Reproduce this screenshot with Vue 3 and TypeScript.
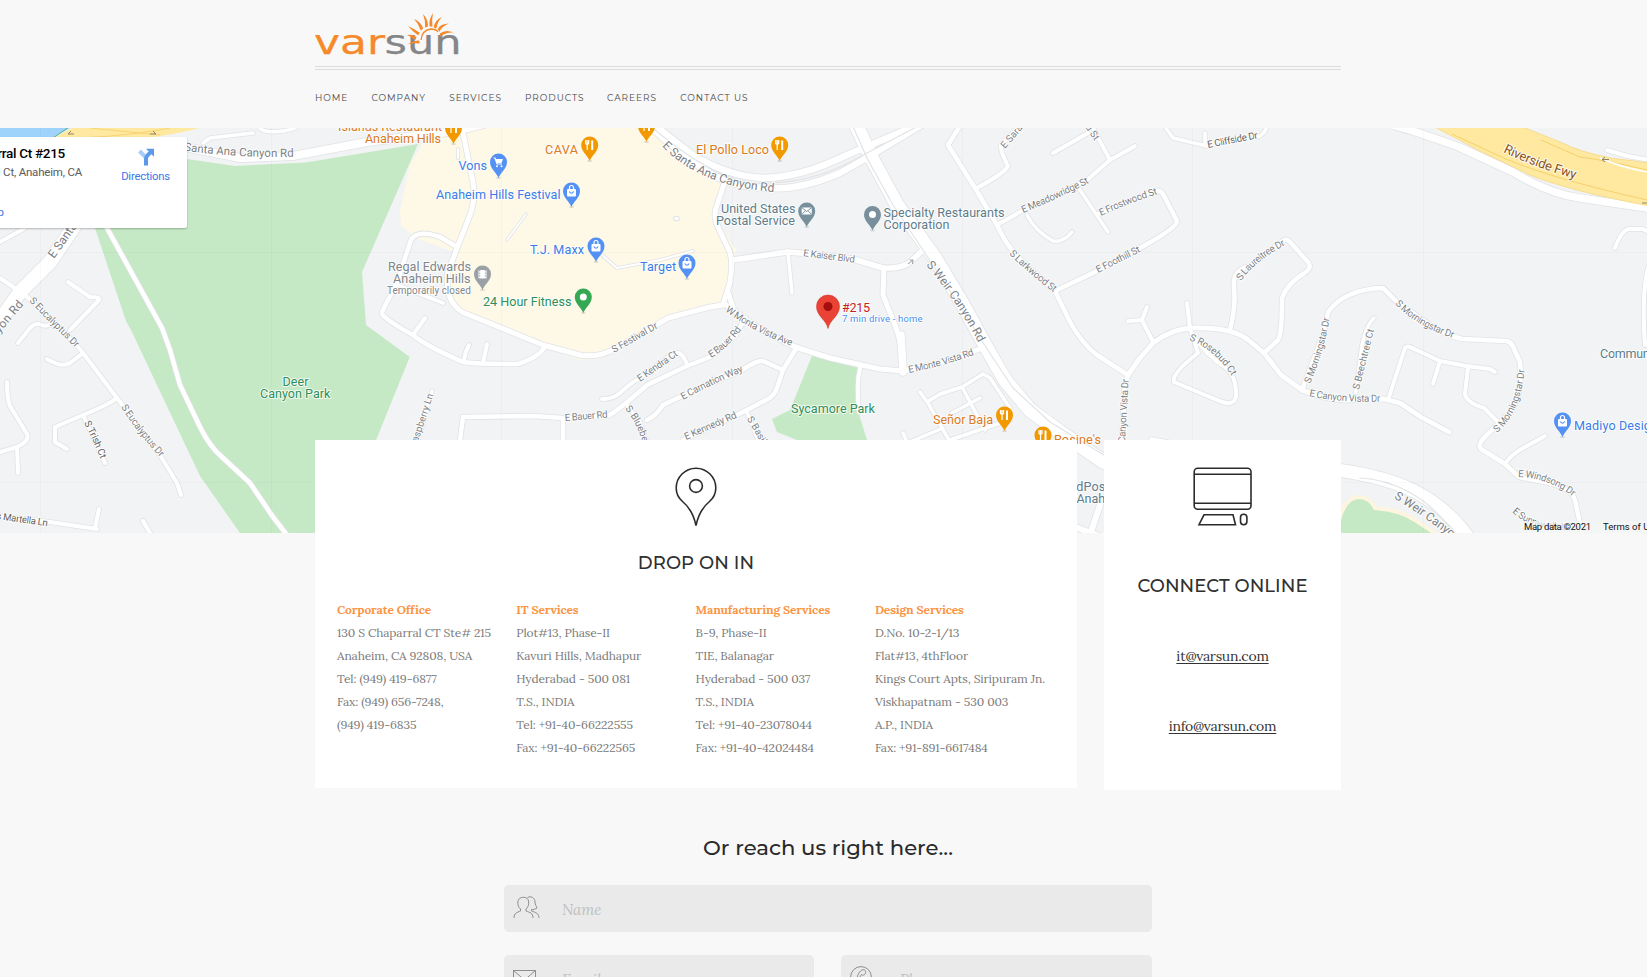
<script setup lang="ts">
interface Road { d: string; w: number }
interface RoadLabel { text: string; d: string; size?: number; color?: string; len?: number }
interface Poi { x: number; y: number; kind: 'food' | 'shop' | 'cart' | 'dot' | 'mail' | 'film'; color: string }
interface PlaceLabel { text: string; x: number; y: number; color: string; len: number; size?: number }

const nav = [
  { label: 'Home', w: 32.5 },
  { label: 'Company', w: 53.8 },
  { label: 'Services', w: 51.7 },
  { label: 'Products', w: 58 },
  { label: 'Careers', w: 49.3 },
  { label: 'Contact us', w: 68 },
]

const offices = [
  { title: 'Corporate Office', lines: ['130 S Chaparral CT Ste# 215', 'Anaheim, CA 92808, USA', 'Tel: (949) 419-6877', 'Fax: (949) 656-7248,', '(949) 419-6835'] },
  { title: 'IT Services', lines: ['Plot#13, Phase-II', 'Kavuri Hills, Madhapur', 'Hyderabad - 500 081', 'T.S., INDIA', 'Tel: +91-40-66222555', 'Fax: +91-40-66222565'] },
  { title: 'Manufacturing Services', lines: ['B-9, Phase-II', 'TIE, Balanagar', 'Hyderabad - 500 037', 'T.S., INDIA', 'Tel: +91-40-23078044', 'Fax: +91-40-42024484'] },
  { title: 'Design Services', lines: ['D.No. 10-2-1/13', 'Flat#13, 4thFloor', 'Kings Court Apts, Siripuram Jn.', 'Viskhapatnam - 530 003', 'A.P., INDIA', 'Fax: +91-891-6617484'] },
]

const rays: number[][] = [
  [419, 34, 413, 30, 408, 26], [422, 29.5, 420, 23, 414, 19], [426.5, 27, 427, 20, 423, 14],
  [431, 26.5, 430, 20, 433, 13], [435, 28, 436, 21, 442, 17], [438.5, 30.5, 441, 25, 449, 23.5],
  [440, 35, 446, 30.5, 453.5, 32.5], [416, 38.5, 412, 35.5, 407, 35], [419.5, 42, 414, 41.5, 408, 44],
]
const rayPath = ([bx, by, cx, cy, tx, ty]: number[]) => {
  const dx = tx - bx
  const dy = ty - by
  const l = Math.hypot(dx, dy)
  const nx = (-dy / l) * 1.5
  const ny = (dx / l) * 1.5
  return `M${bx + nx} ${by + ny}Q${cx + nx} ${cy + ny} ${tx} ${ty}Q${cx - nx} ${cy - ny} ${bx - nx} ${by - ny}Z`
}

const roads: Road[] = [
  // west side
  { d: 'M76 222L73 228L50 262L20 292L-4 326', w: 14 },
  { d: 'M0 242L25 228', w: 4 },
  { d: 'M0 278L25 295L50 318L78 347L83 353L117 398L160 455L177 483L181 495', w: 4 },
  { d: 'M68 282L90 297Q101 297 99 300L70 330', w: 4 },
  { d: 'M55 320Q48 328 42 325Q35 322 30 328L18 343', w: 4 },
  { d: 'M47 359Q62 368 70 363L83 353', w: 4 },
  { d: 'M7 382Q7 398 10 406L27 434Q30 441 17 447L0 452M17 447L18 473', w: 4 },
  { d: 'M117 398Q108 405 83 415L55 427L55 442L67 449M83 415L105 463', w: 4 },
  { d: 'M0 516L50 522L97 529M99 509L95 528M143 521L150 533', w: 4 },
  { d: 'M100 216L107 228L162 328L170 350L180 385L200 427Q210 447 222 457L250 483L273 517L287 535', w: 4.5 },
  { d: 'M180 146L240 158L293 156L367 142L455 131L500 120', w: 8 },
  { d: 'M203 143L210 138L253 133M258 126Q262 133 278 131.5T298 126', w: 3.5 },
  // shopping district
  { d: 'M461 124L463 133L473 182Q476 197 470 215L457 248L448 272Q444 300 462 312L543 345L580 355Q596 358 613 350L668 318L710 307L723 305L730 282Q734 258 728 248L717 225Q713 214 717 205L724 184', w: 5 },
  { d: 'M457 247L440 237Q417 229 411 240L397 282L382 312Q380 317 413 335Q424 345 463 362Q475 364 518 364Q540 357 545 346', w: 4.5 },
  { d: 'M397 285L443 303M425 318L413 335M469 345Q465 352 464 360M487 344L483 363', w: 4 },
  { d: 'M526 214L507 240', w: 1.6 },
  { d: 'M602 255L617 268L660 260L693 251M458 149L458 158', w: 2.2 },
  { d: 'M645 112L663 132L693 155Q727 176 763 178Q800 178 847 155L913 127', w: 6.5 },
  { d: 'M638 112L652 128Q690 162 713 175T773 188Q800 190 840 173L863 160L923 124', w: 6.5 },
  // Kaiser and Monta Vista
  { d: 'M733 260L787 252L800 253L853 259L883 268Q902 269 910 262L923 250', w: 5.5 },
  { d: 'M788 253L792 293', w: 3.5 },
  { d: 'M884 268L883 295L895 325Q903 345 903 372', w: 5 },
  { d: 'M901 335L903 372', w: 7.5 },
  { d: 'M728 292L733 307M726 305L760 329L795 347L830 358L880 369L903 371L940 363L980 349', w: 5 },
  { d: 'M860 368Q856 385 859 412', w: 4 },
  { d: 'M797 347L783 370L777 388Q774 396 768 399L745 411L683 440', w: 4.5 },
  { d: 'M747 412L758 440', w: 3.5 },
  { d: 'M647 420Q655 417 663 405L680 397L742 370Q757 360 763 361L783 370', w: 4.5 },
  { d: 'M460 440L463 417L533 416L563 418L607 416Q613 415 647 385L687 366L710 357L736 335L745 318M563 418L563 442', w: 4.5 },
  { d: 'M627 405L640 422L647 442', w: 3.5 },
  { d: 'M602 399Q613 399 620 393Q632 382 637 380L674 353Q683 351 687 365', w: 4 },
  { d: 'M432 391L418 440', w: 3.5 },
  // Weir Canyon
  { d: 'M853 118L870 155L897 205L935 258L962 303L985 345L1005 380L1030 410L1060 432L1104 462', w: 14 },
  { d: 'M1320 468Q1380 474 1414 491T1470 540', w: 13 },
  // east of Weir Canyon
  { d: 'M960 126L948 145L975 188L997 225Q1008 249 1025 264L1055 291L1070 322Q1083 345 1097 355L1128 375', w: 4.5 },
  { d: 'M1020 126L1001 145Q1000 151 1008 166Q1006 172 977 188', w: 4 },
  { d: 'M997 225L1020 212L1087 180L1110 160L1135 146M1092 126L1110 160M1053 153L1088 133', w: 4 },
  { d: 'M1027 215Q1035 231 1053 241Q1063 243 1072 232M1078 187L1108 232', w: 3.5 },
  { d: 'M1098 214L1155 191Q1160 190 1163 194L1177 221Q1177 228 1140 248L1095 272L1057 290', w: 4.5 },
  { d: 'M1163 124L1173 138L1207 146M1205 133L1205 146M1258 137Q1265 134 1267 126', w: 3.5 },
  { d: 'M1122 442L1125 385L1128 375L1140 358L1153 343Q1173 328 1193 328Q1230 327 1247 339L1264 353L1281 375L1302 390Q1320 398 1344 400L1384 399L1400 403L1421 417L1449 432', w: 4.8 },
  { d: 'M1128 321L1142 320L1153 342M1147 307L1142 320M1187 303L1190 328', w: 4 },
  { d: 'M1190 328L1198 353Q1171 374 1174 382L1222 402Q1238 407 1236 390Q1235 375 1225 367Q1208 357 1192 334', w: 4 },
  { d: 'M1230 330Q1236 306 1234 288T1250 266L1280 243Q1286 237 1290 242L1308 262Q1313 268 1303 274Q1288 283 1282 298Q1282 335 1278 340L1264 353', w: 4.5 },
  { d: 'M1302 390L1324 332L1328 312Q1345 289 1383 288L1397 302L1430 325Q1450 337 1463 339L1506 341Q1512 342 1514 349L1520 362Q1523 390 1512 411L1491 431Q1476 444 1481 449L1505 464L1519 477L1550 483Q1572 489 1575 500L1582 533', w: 4.5 },
  { d: 'M1355 398L1362 345Q1366 325 1374 318', w: 3.5 },
  { d: 'M1388 400L1405 348Q1407 345 1412 348L1440 361L1466 366L1490 369L1495 372M1440 361L1433 384', w: 4 },
  { d: 'M1468 368L1465 393Q1465 402 1484 408L1498 422M1505 464Q1510 455 1525 447L1545 436', w: 4 },
  { d: 'M1395 126L1410 130L1457 146L1513 172Q1550 194 1580 198L1647 208', w: 7.5 },
  { d: 'M1607 150L1627 156L1650 160M1615 248Q1622 229 1630 229H1643L1650 233M1650 262Q1641 285 1645 345', w: 4 },
  // Señor Baja block
  { d: 'M920 392L928 403L950 442M927 402L940 394L962 387L983 374L990 378L1010 408M962 387L985 430M952 413L980 398M903 433L907 442M910 442L943 428M950 440L985 428L1010 420', w: 3.5 },
  { d: 'M1151 439L1168 442', w: 3.5 },
  { d: 'M1070 525L1104 538M1100 505L1090 535', w: 6 },
]

const dividers = ['M850 120L868 160L893 205L921 247L956 300L991 355L1013 388L1050 422L1104 455', 'M1360 478Q1385 479 1409 492T1452 530', 'M648 124Q690 160 720 173T765 183Q810 183 850 162L920 125']

const roadLabels: RoadLabel[] = [
  { text: 'Santa Ana Canyon Rd', d: 'M184 150.500Q240 158.500 300 156.500', size: 11.5, len: 110 },
  { text: 'E Santa', d: 'M54 259L90 208', size: 12 },
  { text: 'nyon Rd', d: 'M-5 339L30 297', size: 12, len: 45 },
  { text: 'S Eucalyptus Dr', d: 'M29 301Q55 328 80 352', len: 66 },
  { text: 'S Eucalyptus Dr', d: 'M121 407Q138 434 163 460', len: 64 },
  { text: 'S Trish Ct', d: 'M84 423Q93 440 102 462', len: 40, color: '#66625c' },
  { text: 's Martella Ln', d: 'M-4 519L60 528', len: 52, color: '#66625c' },
  { text: 'E Santa Ana Canyon Rd', d: 'M662 146Q700 187 775 192', size: 12, len: 124 },
  { text: 'S Festival Dr', d: 'M614 353L670 321', len: 51 },
  { text: 'W Monta Vista Ave', d: 'M725 311Q758 335 800 349', len: 75 },
  { text: 'E Bauer Rd', d: 'M711 358Q728 348 745 325', len: 42 },
  { text: 'E Bauer Rd', d: 'M565 421L615 417', len: 43 },
  { text: 'E Kendra Ct', d: 'M640 382L690 347', len: 47 },
  { text: 'E Carnation Way', d: 'M683 400Q715 382 752 368', len: 67 },
  { text: 'E Kennedy Rd', d: 'M686 440L745 414', len: 56 },
  { text: 'S Blueberry', d: 'M625 409Q640 425 647 460' },
  { text: 'S Basil', d: 'M747 419Q755 432 766 452' },
  { text: 'Raspberry Ln', d: 'M416 448L435 390', len: 56 },
  { text: 'E Kaiser Blvd', d: 'M803 256L865 264', len: 52 },
  { text: 'E Monte Vista Rd', d: 'M909 373Q945 366 982 352', len: 68 },
  { text: 'S Weir Canyon Rd', d: 'M926 265Q960 305 982 350', size: 12, len: 94 },
  { text: 'E Sara', d: 'M1005 149L1030 120' },
  { text: 'd St', d: 'M1085 127L1100 149' },
  { text: 'E Meadowridge St', d: 'M1023 213Q1055 200 1097 179', len: 73 },
  { text: 'E Frostwood St', d: 'M1101 216Q1130 202 1165 192', len: 61 },
  { text: 'E Foothill St', d: 'M1098 273L1150 247', len: 48 },
  { text: 'S Larkwood St', d: 'M1009 254Q1029 274 1060 297', len: 59 },
  { text: 'E Cliffside Dr', d: 'M1208 148L1270 136', len: 51, color: '#66625c' },
  { text: 'S Laureltree Dr', d: 'M1241 281Q1256 259 1293 241', len: 58 },
  { text: 'S Rosebud Ct', d: 'M1189 340Q1218 350 1237 385', len: 57 },
  { text: 'Canyon Vista Dr', d: 'M1125 443L1129 372', len: 64 },
  { text: 'E Canyon Vista Dr', d: 'M1309 396Q1345 404 1390 401', len: 72 },
  { text: 'S Morningstar Dr', d: 'M1310 384Q1325 350 1331 310', len: 69 },
  { text: 'S Beechtree Ct', d: 'M1359 390L1375 326', len: 62 },
  { text: 'S Morningstar Dr', d: 'M1395 304Q1420 330 1463 341', len: 68 },
  { text: 'S Morningstar Dr', d: 'M1497 433Q1523 410 1525 362', len: 71 },
  { text: 'E Windsong Dr', d: 'M1518 477Q1552 478 1578 501', len: 59 },
  { text: 'E Sunnywalk Ln', d: 'M1512 512Q1526 526 1552 529L1590 532', len: 63 },
  { text: 'S Weir Canyon Rd', d: 'M1394 498Q1430 520 1480 560', size: 12, len: 94 },
  { text: 'Riverside Fwy', d: 'M1503 152Q1540 170 1590 183', size: 13, color: '#8b5523', len: 77 },
]

const pois: Poi[] = [
  { x: 453.5, y: 144, kind: 'food', color: '#f29900' },
  { x: 589.7, y: 161, kind: 'food', color: '#f29900' },
  { x: 646.5, y: 142, kind: 'food', color: '#f29900' },
  { x: 779.7, y: 161, kind: 'food', color: '#f29900' },
  { x: 1004.5, y: 431, kind: 'food', color: '#f29900' },
  { x: 1043, y: 451, kind: 'food', color: '#f29900' },
  { x: 498.5, y: 178, kind: 'cart', color: '#5491f5' },
  { x: 571.5, y: 207, kind: 'shop', color: '#5491f5' },
  { x: 596, y: 262, kind: 'shop', color: '#5491f5' },
  { x: 687, y: 279, kind: 'shop', color: '#5491f5' },
  { x: 1562.5, y: 437, kind: 'shop', color: '#5491f5' },
  { x: 583.3, y: 313, kind: 'dot', color: '#34a853' },
  { x: 482.5, y: 290, kind: 'film', color: '#9aa0a6' },
  { x: 806.7, y: 227, kind: 'mail', color: '#78909c' },
  { x: 872.5, y: 230.5, kind: 'dot', color: '#78909c' },
]

const orange = '#d97b1e'
const blue = '#3b7de8'
const slate = '#607d8b'
const gray = '#80868b'
const green = '#2f8f57'
const places: PlaceLabel[] = [
  { text: 'Islands Restaurant', x: 338, y: 130.5, color: orange, len: 104 },
  { text: 'Anaheim Hills', x: 365, y: 143, color: orange, len: 76 },
  { text: 'CAVA', x: 545, y: 154, color: orange, len: 33 },
  { text: 'El Pollo Loco', x: 696, y: 154, color: orange, len: 73 },
  { text: 'Señor Baja', x: 933, y: 424, color: orange, len: 60 },
  { text: "Rosine's", x: 1054, y: 444, color: orange, len: 47 },
  { text: 'Vons', x: 458.5, y: 170.3, color: blue, len: 28.5 },
  { text: 'Anaheim Hills Festival', x: 436, y: 199.3, color: blue, len: 124.5 },
  { text: 'T.J. Maxx', x: 530, y: 254, color: blue, len: 54 },
  { text: 'Target', x: 640, y: 271.3, color: blue, len: 36 },
  { text: 'Madiyo Design', x: 1574, y: 430, color: blue, len: 84 },
  { text: '24 Hour Fitness', x: 483, y: 305.5, color: green, len: 88.5 },
  { text: 'Regal Edwards', x: 388, y: 270.7, color: gray, len: 83 },
  { text: 'Anaheim Hills', x: 393, y: 283, color: gray, len: 77.5 },
  { text: 'Temporarily closed', x: 387, y: 293.5, color: gray, len: 84, size: 10 },
  { text: 'United States', x: 721, y: 212.7, color: slate, len: 74.5 },
  { text: 'Postal Service', x: 716, y: 225.4, color: slate, len: 79 },
  { text: 'Specialty Restaurants', x: 883.5, y: 216.5, color: slate, len: 121 },
  { text: 'Corporation', x: 883.5, y: 229, color: slate, len: 66 },
  { text: 'UnitedPost', x: 1046.5, y: 491, color: slate, len: 63 },
  { text: 'Anaheim', x: 1076.5, y: 503, color: slate, len: 49 },
  { text: 'Community', x: 1600, y: 358, color: slate, len: 62 },
  { text: 'Deer', x: 282.5, y: 385.7, color: green, len: 26 },
  { text: 'Canyon Park', x: 260, y: 398, color: green, len: 70.5 },
  { text: 'Sycamore Park', x: 791, y: 413.3, color: green, len: 84 },
  { text: '#215', x: 842, y: 311.7, color: '#c5221f', len: 28 },
  { text: '7 min drive - home', x: 842, y: 322.3, color: '#4a8ff0', len: 80.5, size: 9.5 },
]
const gridX = [40.5, 271.5, 501.5, 732.5, 962.5, 1192.5, 1423.5]
</script>

<template>
  <div class="page">
    <header class="header">
      <svg class="logo" viewBox="315 10 146 46" width="146" height="46" role="img" aria-label="varsun">
        <text class="brand warm" x="314" y="53.6" textLength="71" lengthAdjust="spacingAndGlyphs">var</text>
        <text class="brand cool" x="384.5" y="53.6" textLength="77" lengthAdjust="spacingAndGlyphs">sun</text>
        <g fill="#f6892a">
          <path v-for="(r, i) in rays" :key="i" :d="rayPath(r)" />
        </g>
        <path d="M421 40Q422 30 431 29Q436 29 438 32" fill="none" stroke="#f6892a" stroke-width="1.3" />
      </svg>
      <nav class="nav">
        <a v-for="n in nav" :key="n.label" :style="{ width: n.w + 'px' }">{{ n.label }}</a>
      </nav>
    </header>

    <section class="map">
      <svg class="canvas" viewBox="0 128 1647 405" width="1647" height="405">
        <defs>
          <path v-for="(l, i) in roadLabels" :id="'rl' + i" :key="i" :d="l.d" />
        </defs>
        <rect y="128" width="1647" height="405" fill="#f1f3f4" />
        <path d="M0 128H70L53 138H0Z" fill="#9fd3fb" />
        <path d="M53 138L69 127" stroke="#5ab57c" />
        <path d="M72 128L54 138H145Q180 134 206 126H72Z" fill="#ffe9a1" />
        <path d="M80 138Q140 135 180 126M90 128L160 135" fill="none" stroke="#f7d374" />
        <path d="M94 150L180 158L235 166L306 162.500L418 144L362 272L366 325L409.700 357L370 455L350 533H240L200 476L131 330L126 321L95 228Z" fill="#c5e8c5" />
        <path d="M436 128L423 143L410 165L400 210L401 226L420 240L455 252L446 290L450 305L465 316L580 360L602 358L668 320L724 307L733 260L736 250L717 220L714 200L722 186L646 124Z" fill="#fef8e7" />
        <path d="M812 356L858 368L857 408L867 440H797L777 432L772 419L790 410Z" fill="#c5e8c5" />
        <path d="M1339 520Q1345 498 1358 497Q1370 497 1375 508Q1400 510 1415 520L1438 535H1339Z" fill="#c5e8c5" stroke="#fdf5e0" stroke-width="4" />
        <g fill="none" stroke-linecap="round" stroke-linejoin="round">
          <path v-for="(r, i) in roads" :key="'c' + i" :d="r.d" stroke="#e1e3e6" :stroke-width="r.w + 1.6" />
          <path v-for="(r, i) in roads" :key="'r' + i" :d="r.d" stroke="#fff" :stroke-width="r.w" />
          <path v-for="(d, i) in dividers" :key="'d' + i" :d="d" stroke="#e1e3e6" stroke-width="1.2" />
        </g>
        <ellipse cx="676.500" cy="218.500" rx="3.200" ry="2.200" fill="#fff" stroke="#dedfe0" />
        <path d="M1433 126L1480 151L1530 175Q1570 191 1650 206V163L1610 158Q1580 152 1560 142L1520 126Z" fill="#ffe9a1" stroke="#f7dc8b" />
        <path d="M1452 134L1495 154Q1540 176 1647 200M1541 140L1580 157Q1610 161 1647 170" fill="none" stroke="#f5d06c" />
        <path d="M1600 158Q1620 167 1647 172" fill="none" stroke="#fff" stroke-width="1.500" />
        <path d="M1602 159.500H1609M1602 159.500L1605 157M1602 159.500L1605 162M1642 203H1647M68 134H74M68 134L71 131M150 134H156M156 134L153 131" fill="none" stroke="#8d8468" />
        <path d="M908 264L913 260M913 260L909.500 260M913 260L912.500 264" stroke="#9a9da1" fill="none" />
        <g stroke="#000" stroke-opacity=".02">
          <path v-for="x in gridX" :key="x" :d="`M${x} 128V533`" />
          <path d="M0 252.500H1647M0 482.500H1647" />
        </g>
        <g class="road-names">
          <text v-for="(l, i) in roadLabels" :key="i" :font-size="l.size ?? 9.8" :fill="l.color ?? '#7d8185'" :textLength="l.len">
            <textPath :href="'#rl' + i" :textLength="l.len">{{ l.text }}</textPath>
          </text>
        </g>
        <g v-for="(p, i) in pois" :key="'p' + i" :transform="`translate(${p.x} ${p.y})`">
          <ellipse cx="0" cy="0" rx="2.500" ry="1" fill="#000" opacity=".12" />
          <path d="M0 0C-1.500-5-8.500-9-8.500-16A8.500 8.500 0 0 1 8.500-16C8.500-9 1.500-5 0 0Z" :fill="p.color" />
          <g v-if="p.kind === 'food'" stroke="#fff" fill="none" stroke-width="1.200">
            <path d="M-4-21V-17.500Q-2.500-15.500-1-17.500V-21M-2.500-21V-11" /><path d="M2.500-11V-20.500" stroke-width="2" />
          </g>
          <g v-else-if="p.kind === 'shop'">
            <rect x="-4.500" y="-18" width="9" height="7.500" rx="1" fill="#fff" />
            <path d="M-2-18V-19.500A2 2 0 0 1 2-19.500V-18" fill="none" stroke="#fff" stroke-width="1.200" />
            <path d="M-2.200-15.500Q0-12 2.200-15.500" fill="none" :stroke="p.color" stroke-width="1.100" />
          </g>
          <g v-else-if="p.kind === 'cart'">
            <path d="M-3-19H4.500L3-15H-2Z" fill="#fff" />
            <path d="M-5-20H-3.500L-1.500-14H3.500" fill="none" stroke="#fff" stroke-width="1.200" />
            <circle cx="-1.500" cy="-11.800" r="1" fill="#fff" /><circle cx="3" cy="-11.800" r="1" fill="#fff" />
          </g>
          <circle v-else-if="p.kind === 'dot'" cy="-16" r="3.500" fill="#fff" />
          <g v-else-if="p.kind === 'mail'">
            <rect x="-5" y="-19.500" width="10" height="7" fill="#fff" />
            <path d="M-5-19.500L0-15.500L5-19.500M-5-12.500L-1.500-16M5-12.500L1.500-16" fill="none" stroke="#78909c" />
          </g>
          <g v-else>
            <rect x="-4" y="-20" width="8" height="8.500" fill="#fff" />
            <path d="M-2.800-20V-11.500M2.800-20V-11.500" stroke="#9aa0a6" stroke-dasharray="1.300 1.300" />
          </g>
        </g>
        <path d="M828 328.500C826.500 320 816.500 316 816.500 306.500A11.500 11.500 0 0 1 839.500 306.500C839.500 316 829.500 320 828 328.500Z" fill="#ea4335" stroke="#d33b2e" stroke-width=".6" />
        <circle cx="828" cy="306.500" r="4.500" fill="#a50e0e" />
        <g class="place-names">
          <text v-for="(p, i) in places" :key="'n' + i" :x="p.x" :y="p.y" :fill="p.color" :font-size="p.size ?? 12.6" :textLength="p.len">{{ p.text }}</text>
        </g>
        <g class="credits">
          <rect x="1520" y="521" width="127" height="12" fill="#f5f5f5" opacity=".7" />
          <text x="1524" y="530" textLength="67">Map data ©2021</text>
          <text x="1603" y="530">Terms of Use</text>
        </g>
      </svg>
      <aside class="place-card">
        <div class="place-text">
          <strong>130 S Chaparral Ct #215</strong>
          <span>130 S Chaparral Ct, Anaheim, CA</span>
          <a>View larger map</a>
        </div>
        <div class="directions">
          <svg viewBox="0 0 18 18" width="18" height="18">
            <path d="M2.500 3L9 9.500V13" fill="none" stroke="#a9cbf7" stroke-width="4" />
            <path d="M9 17.500V11Q9 8 13.500 4.500" fill="none" stroke="#5c9ae8" stroke-width="4" />
            <path d="M9 .8H17V8.800Z" fill="#5c9ae8" />
          </svg>
          <a>Directions</a>
        </div>
      </aside>
    </section>

    <section class="cards">
      <article class="card offices">
        <svg class="pin" viewBox="0 0 42 60" width="42" height="60">
          <path d="M21 58.500C19 49 13.500 39.500 7.500 34.500C3.500 31 1.200 26 1.200 21A19.800 19.800 0 0 1 40.800 21C40.800 26 38.500 31 34.500 34.500C28.500 39.500 23 49 21 58.500Z" />
          <circle cx="21" cy="19" r="6.400" />
        </svg>
        <h2>Drop On In</h2>
        <div class="columns">
          <div v-for="o in offices" :key="o.title" class="office">
            <b>{{ o.title }}</b>
            <span v-for="l in o.lines" :key="l">{{ l }}</span>
          </div>
        </div>
      </article>
      <article class="card online">
        <svg class="monitor" viewBox="0 0 60 60" width="60" height="60">
          <rect x="1.200" y="1.200" width="56.800" height="41" rx="3.500" />
          <path d="M1.200 7.300H58M1.200 36.300H58M11 47.800H40L42.500 57.700H6Z" />
          <rect x="47.500" y="47.200" width="6.400" height="10.600" rx="3.200" />
        </svg>
        <h2>Connect Online</h2>
        <a>it@varsun.com</a>
        <a>info@varsun.com</a>
      </article>
    </section>

    <section class="contact">
      <h3>Or reach us right here...</h3>
      <form class="form">
        <label class="field wide">
          <svg viewBox="0 0 27 24" width="27" height="24">
            <path d="M1 22C1 17 4 16.500 7.500 15V13C5 11 4.500 8 5 5C6 0 15 0 15.500 5C16 8 15.500 11 13 13V15C17 16.500 20 17 20 22" />
            <path d="M14.500 1.500C18-.5 22 2 22 6C22 9 23.500 10 24 12C22 13.500 20 13.500 18.500 13.500V15C23 16.500 26 17.500 26 22" />
          </svg>
          <input placeholder="Name" />
        </label>
        <label class="field">
          <svg viewBox="0 0 23 18" width="23" height="18" class="mail">
            <path d="M.5.5H22.500V17.500H.5ZM.5.5L11.500 10L22.500.5M.5 17.500L8.500 8M22.500 17.500L14.500 8" />
          </svg>
          <input placeholder="Email" />
        </label>
        <label class="field">
          <svg viewBox="0 0 22 22" width="22" height="22">
            <circle cx="11" cy="11" r="10.400" />
            <path d="M7 18C6 13 8 6 12 4C15 3 16 5 15.500 7C15 9 12.500 10 11.500 8.500M9 18C9 14 10 10 11.500 8.500M7 18H9" />
          </svg>
          <input placeholder="Phone" />
        </label>
      </form>
    </section>
  </div>
</template>

<style>
html, body { margin: 0; overflow: hidden; background: #f8f8f8; }
</style>

<style scoped>
.page { width: 1647px; height: 977px; overflow: hidden; background: #f8f8f8; font-family: Lora, "Liberation Serif", serif; }
.header { width: 1026px; height: 128px; margin-left: 315px; box-sizing: border-box; padding-top: 10px; }
.logo { display: block; }
.brand { font: 34.500px "DejaVu Sans", sans-serif; stroke-width: .25; }
.warm { fill: #f6892a; stroke: #f6892a; }
.cool { fill: #858688; stroke: #858688; }
.nav { display: flex; gap: 24px; margin-top: 10px; padding-top: 20px; border-top: 4px double #dcdcdc; font: 9px/16px Montserrat, Inter, sans-serif; color: #484848; text-transform: uppercase; letter-spacing: .97px; white-space: nowrap; }
.nav a { flex: none; }
.map { position: relative; height: 405px; overflow: hidden; }
.canvas { display: block; font-family: Roboto, sans-serif; }
.road-names text, .place-names text { paint-order: stroke; stroke: #fff; stroke-width: 2px; stroke-opacity: .8; stroke-linejoin: round; }
.credits { font-size: 9.500px; fill: #111; }
.place-card { position: absolute; right: 1460px; top: 9px; width: 320px; height: 91px; box-sizing: border-box; padding: 7px 17px 0 0; display: flex; justify-content: flex-end; background: #fff; border-radius: 2px; box-shadow: 0 1px 2px rgba(0, 0, 0, .25); font: 11.500px/18px Roboto, sans-serif; color: #5b5b5b; }
.place-text { display: flex; flex-direction: column; align-items: flex-end; width: 240px; padding-right: 39px; box-sizing: border-box; white-space: nowrap; }
.place-text strong { font-size: 13.500px; line-height: 19px; font-weight: 500; color: #000; margin-right: 17px; letter-spacing: -.3px; }
.place-text span { letter-spacing: -.2px; }
.place-text a { margin-top: 22px; margin-right: 78px; color: #3b78e7; }
.directions { display: flex; flex-direction: column; align-items: center; width: 49px; padding-top: 4px; color: #3b78e7; font-size: 11.300px; letter-spacing: -.2px; }
.directions a { line-height: 16px; margin-top: 3px; }
.cards { position: relative; display: flex; align-items: flex-start; gap: 27px; margin: -93px 0 0 315px; }
.card { display: flex; flex-direction: column; align-items: center; box-sizing: border-box; background: #fff; }
.card > svg { fill: none; stroke: #2b2b2b; stroke-width: 1.600; }
.card h2 { margin: 0; font: 500 18px/26px Montserrat, Inter, sans-serif; color: #303030; text-transform: uppercase; white-space: nowrap; letter-spacing: .06px; }
.offices { width: 762px; height: 348px; padding: 27px 22px 0; }
.offices h2 { margin-top: 23px; }
.columns { align-self: stretch; display: grid; grid-template-columns: repeat(4, 179.300px); margin-top: 22px; }
.office { display: flex; flex-direction: column; font-size: 12px; line-height: 23px; letter-spacing: -.12px; color: #7a7a7a; white-space: nowrap; }
.office b { color: #fb9545; letter-spacing: -.16px; }
.online { width: 237px; height: 350px; padding-top: 27px; }
.online h2 { margin-top: 46px; }
.online a { margin-top: 46px; font-size: 14px; line-height: 24px; letter-spacing: -.27px; color: #333; text-decoration: underline; text-underline-offset: 2px; }
.online h2 + a { margin-top: 45px; }
.contact { width: 648px; margin-left: 504px; }
.contact h3 { margin: 42px 0 23px; text-align: center; font: 500 21.200px/30px Montserrat, Inter, sans-serif; color: #2a2a2a; }
.form { display: grid; grid-template-columns: 310px 311px; gap: 23px 27px; }
.field { display: flex; align-items: flex-start; height: 47px; box-sizing: border-box; padding: 11px 0 0 9px; border-radius: 5px; background: #eaeaea; }
.wide { grid-column: 1 / 3; }
.field svg { flex: none; fill: none; stroke: #858585; stroke-width: .9; }
.field .mail { margin-top: 4px; }
.field input { flex: 1; min-width: 0; height: 26px; margin-left: 22px; padding: 0; border: 0; outline: 0; background: transparent; font: italic 15px Lora, "Liberation Serif", serif; letter-spacing: -.1px; }
.field .mail + input { margin-left: 26px; }
.field:last-child input { margin-left: 28px; }
.field input::placeholder { color: #bfbfbf; opacity: 1; }
</style>
